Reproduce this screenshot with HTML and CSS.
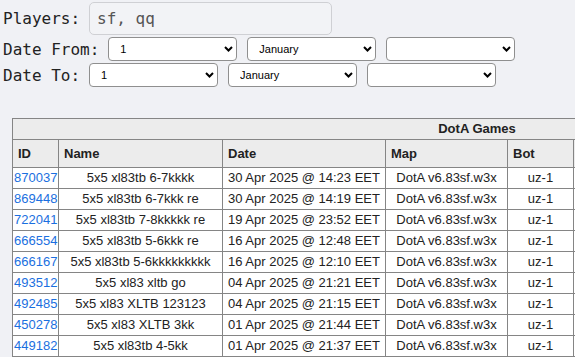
FILE: index.html
```html
<!DOCTYPE html>
<html>
<head>
    <meta charset="UTF-8">
    <meta name="viewport" content="width=device-width, initial-scale=1.0">
    <title>DotA Games</title>
    <link rel="stylesheet" href="styles.css">
</head>
<body>
    <div class="filters">
        <div class="filter-row">
            <label class="filter-label">Players:</label>
            <input class="players-input" type="text" value="sf, qq">
        </div>
        <div class="filter-row">
            <label class="filter-label">Date From:</label>
            <span class="pick">
                <select><option>1</option></select>
                <svg class="chev" viewBox="0 0 9 6"><path d="M1 1 L4.5 4.5 L8 1"/></svg>
            </span>
            <span class="pick">
                <select><option>January</option></select>
                <svg class="chev" viewBox="0 0 9 6"><path d="M1 1 L4.5 4.5 L8 1"/></svg>
            </span>
            <span class="pick">
                <select><option></option></select>
                <svg class="chev" viewBox="0 0 9 6"><path d="M1 1 L4.5 4.5 L8 1"/></svg>
            </span>
        </div>
        <div class="filter-row">
            <label class="filter-label">Date To:</label>
            <span class="pick">
                <select><option>1</option></select>
                <svg class="chev" viewBox="0 0 9 6"><path d="M1 1 L4.5 4.5 L8 1"/></svg>
            </span>
            <span class="pick">
                <select><option>January</option></select>
                <svg class="chev" viewBox="0 0 9 6"><path d="M1 1 L4.5 4.5 L8 1"/></svg>
            </span>
            <span class="pick">
                <select><option></option></select>
                <svg class="chev" viewBox="0 0 9 6"><path d="M1 1 L4.5 4.5 L8 1"/></svg>
            </span>
        </div>
    </div>

    <div class="games-wrap">
        <table class="games">
            <colgroup>
                <col class="c-id"><col class="c-name"><col class="c-date"><col class="c-map"><col class="c-bot"><col>
            </colgroup>
            <tr><th class="title" colspan="6">DotA Games</th></tr>
            <tr><th>ID</th><th>Name</th><th>Date</th><th>Map</th><th>Bot</th><th></th></tr>
            <tr><td class="id"><a href="#">870037</a></td><td>5x5 xl83tb 6-7kkkk</td><td>30 Apr 2025 @ 14:23 EET</td><td>DotA v6.83sf.w3x</td><td>uz-1</td><td></td></tr>
            <tr><td class="id"><a href="#">869448</a></td><td>5x5 xl83tb 6-7kkk re</td><td>30 Apr 2025 @ 14:19 EET</td><td>DotA v6.83sf.w3x</td><td>uz-1</td><td></td></tr>
            <tr><td class="id"><a href="#">722041</a></td><td>5x5 xl83tb 7-8kkkkk re</td><td>19 Apr 2025 @ 23:52 EET</td><td>DotA v6.83sf.w3x</td><td>uz-1</td><td></td></tr>
            <tr><td class="id"><a href="#">666554</a></td><td>5x5 xl83tb 5-6kkk re</td><td>16 Apr 2025 @ 12:48 EET</td><td>DotA v6.83sf.w3x</td><td>uz-1</td><td></td></tr>
            <tr><td class="id"><a href="#">666167</a></td><td>5x5 xl83tb 5-6kkkkkkkkk</td><td>16 Apr 2025 @ 12:10 EET</td><td>DotA v6.83sf.w3x</td><td>uz-1</td><td></td></tr>
            <tr><td class="id"><a href="#">493512</a></td><td>5x5 xl83 xltb go</td><td>04 Apr 2025 @ 21:21 EET</td><td>DotA v6.83sf.w3x</td><td>uz-1</td><td></td></tr>
            <tr><td class="id"><a href="#">492485</a></td><td>5x5 xl83 XLTB 123123</td><td>04 Apr 2025 @ 21:15 EET</td><td>DotA v6.83sf.w3x</td><td>uz-1</td><td></td></tr>
            <tr><td class="id"><a href="#">450278</a></td><td>5x5 xl83 XLTB 3kk</td><td>01 Apr 2025 @ 21:44 EET</td><td>DotA v6.83sf.w3x</td><td>uz-1</td><td></td></tr>
            <tr><td class="id"><a href="#">449182</a></td><td>5x5 xl83tb 4-5kk</td><td>01 Apr 2025 @ 21:37 EET</td><td>DotA v6.83sf.w3x</td><td>uz-1</td><td></td></tr>
        </table>
    </div>
</body>
</html>
```

FILE: styles.css
```css
body {
    margin: 0;
    background-color: #f0f1f5;
    color: #222;
    font-family: "DejaVu Sans Mono", "Liberation Mono", monospace;
    font-size: 16px;
}
.filters {
    padding: 2px 3px 0;
    display: flex;
    flex-direction: column;
    gap: 2px;
}
.filter-row {
    display: flex;
    align-items: center;
    gap: 10px;
}
.filter-label {
    margin-right: -1px;
}
.players-input {
    width: 243px;
    height: 33px;
    box-sizing: border-box;
    border: 1px solid #cfd0d4;
    border-radius: 5px;
    background: #f2f3f6;
    color: #555;
    font-family: inherit;
    font-size: 16px;
    padding: 0 7px;
}
.pick {
    position: relative;
    display: inline-flex;
}
.pick select {
    appearance: none;
    width: 129px;
    height: 24px;
    box-sizing: border-box;
    border: 1px solid #8f8f8f;
    border-radius: 4px;
    background: white;
    color: black;
    font-family: "Liberation Sans", Arial, sans-serif;
    font-size: 11px;
    padding: 0 0 0 11px;
}
.chev {
    position: absolute;
    right: 4px;
    top: 9px;
    width: 9px;
    height: 6px;
    pointer-events: none;
    fill: none;
    stroke: black;
    stroke-width: 2;
}
.games-wrap {
    margin: 31px 0 0 12px;
    overflow: hidden;
}
.games {
    width: 930px;
    table-layout: fixed;
    border-collapse: collapse;
    font-family: "Liberation Sans", Arial, sans-serif;
    font-size: 13px;
    background: white;
}
.c-id { width: 46px; }
.c-name { width: 164px; }
.c-date { width: 163px; }
.c-map { width: 122px; }
.c-bot { width: 66px; }
.games th,
.games td {
    border: 1px solid #858585;
    white-space: nowrap;
    overflow: hidden;
}
.games th {
    background: #ececec;
    text-align: left;
    padding: 5px 5px;
    line-height: 17px;
    color: #222;
}
.games th.title {
    text-align: center;
    padding: 2px 5px;
    line-height: 16px;
}
.games td {
    text-align: center;
    padding: 2px 1px;
    line-height: 16px;
    color: #222;
}
.games td.id {
    text-align: left;
}
.games a {
    color: #1a6fe0;
    text-decoration: none;
}
```
